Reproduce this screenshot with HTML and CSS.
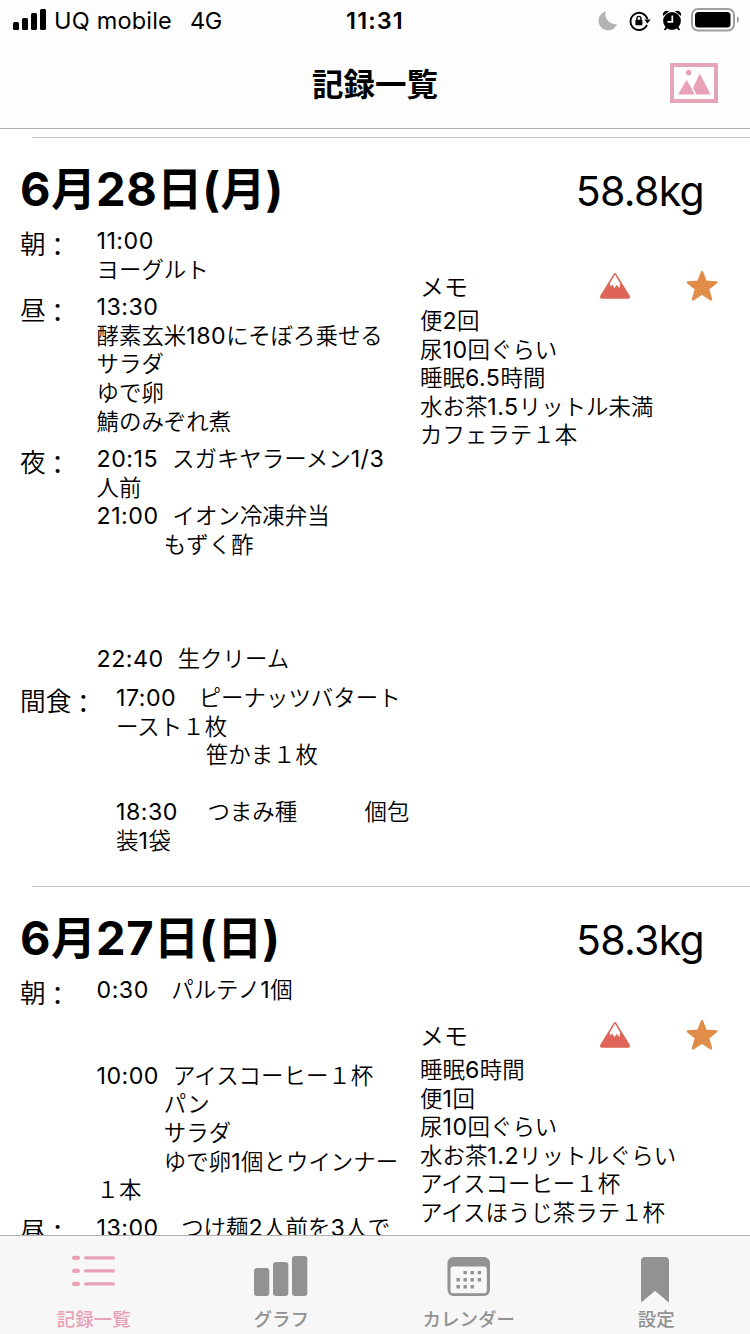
FILE: index.html
```html
<!DOCTYPE html>
<html lang="ja">
<head>
<meta charset="utf-8">
<title>記録一覧</title>
<link rel="stylesheet" href="styles.css">
</head>
<body>
<svg width="0" height="0" class="defs">
  <symbol id="mountain" viewBox="0 0 32 28">
    <path d="M15 1.6Q16 .4 17 1.6L30.6 23.6Q31.8 26.8 29 26.8H3Q.2 26.8 1.4 23.6Z" fill="#dd6456"/>
    <path d="M16 2.6 21.2 11.5 20.4 16.2 17.6 12.8 15.6 16.2 13.2 12.4 11.2 14.6 10.8 11.5Z" fill="#fff"/>
  </symbol>
  <symbol id="star" viewBox="0 0 34 32">
    <path d="M17 2.2 20.7 11.8 31.2 12.4 23.1 18.9 26 29.4 17 23.6 8 29.4 10.9 18.9 2.8 12.4 13.3 11.8Z" fill="#df8d48" stroke="#df8d48" stroke-width="2.4" stroke-linejoin="round"/>
  </symbol>
</svg>
<div class="screen">
  <header class="top">
    <div class="status">
      <div class="carrier">
        <svg class="signal" width="34" height="22" viewBox="0 0 34 22"><rect x="0" y="13" width="6" height="8" rx="1.5"/><rect x="9" y="9" width="6" height="12" rx="1.5"/><rect x="18" y="4" width="6" height="17" rx="1.5"/><rect x="27" y="0" width="6" height="21" rx="1.5"/></svg>
        <span class="name">UQ mobile</span><span class="net">4G</span>
      </div>
      <div class="clock">11:31</div>
      <div class="indicators">
        <svg width="20" height="20" viewBox="0 0 20 20"><path d="M7.500 .5A9.600 9.600 0 1 0 19 13.2A10.600 10.600 0 0 1 7.500 .5Z" fill="#b3b3b3"/></svg>
        <svg class="lock" width="22" height="20" viewBox="0 0 22 20"><path d="M18 13.9A8.6 8.6 0 1 1 18.4 8" fill="none" stroke="#000" stroke-width="1.9"/><path d="M15.4 8.4H21.6L18.4 12.6Z"/><rect x="6.4" y="8.8" width="7" height="5.4" rx=".6"/><path d="M7.9 9V7.4a2 2 0 0 1 4 0V9" fill="none" stroke="#000" stroke-width="1.4"/></svg>
        <svg class="alarm" width="20" height="21" viewBox="0 0 20 21"><circle cx="10" cy="11" r="8.9"/><path d="M1.6 4.6A3 3 0 0 1 5.6 1.6ZM18.4 4.6A3 3 0 0 0 14.4 1.6Z" stroke="#000" stroke-width="1.5"/><path d="M4.6 17.4 2.6 20M15.4 17.4 17.4 20" stroke="#000" stroke-width="1.8"/><path d="M10.3 5.6V11.8H5.4" fill="none" stroke="#fff" stroke-width="1.7"/></svg>
        <svg class="battery" width="49" height="24" viewBox="0 0 49 24"><rect x="1" y="1" width="42" height="21.5" rx="6" fill="none" stroke="#a0a0a0" stroke-width="2"/><rect x="4" y="4" width="35.5" height="15.5" rx="3.5"/><path d="M46 8.5Q48.2 9.6 48.2 11.7T46 15Z" fill="#a0a0a0"/></svg>
      </div>
    </div>
    <div class="nav">
      <h1>記録一覧</h1>
      <svg class="photo" width="48" height="40" viewBox="0 0 48 40"><rect x="2" y="2" width="44" height="36" fill="#fff" stroke="#e5a5b7" stroke-width="4"/><g fill="#e9a1b6"><circle cx="18.7" cy="9.6" r="2.8"/><path d="M8 31.6 16.5 17 22 25.8 22.2 27.4 24.8 31.6Z"/><path d="M29.7 10.4 40.6 31.6H26.4L23 25Z"/></g></svg>
    </div>
  </header>

  <main class="list">
    <section class="day">
      <div class="head"><h2><span>6</span>月<span>28</span>日<span>(</span>月<span>)</span></h2><div class="weight">58.8kg</div></div>
      <div class="body">
        <div class="meals">
          <div class="meal"><div class="label">朝<i>：</i></div><div class="text"><p><b>11:00</b></p><p>ヨーグルト</p></div></div>
          <div class="meal"><div class="label">昼<i>：</i></div><div class="text"><p><b>13:30</b></p><p>酵素玄米<b>180</b>にそぼろ乗せる</p><p>サラダ</p><p>ゆで卵</p><p>鯖のみぞれ煮</p></div></div>
          <div class="meal"><div class="label">夜<i>：</i></div><div class="text"><p><b>20:15  </b>スガキヤラーメン<b>1/3</b></p><p>人前</p><p><b>21:00  </b>イオン冷凍弁当</p><p>　　　もずく酢</p><p></p><p></p><p></p><p><b>22:40  </b>生クリーム</p></div></div>
          <div class="meal wide"><div class="label">間食<i>：</i></div><div class="text"><p><b>17:00</b>　ピーナッツバタート</p><p>ースト１枚</p><p>　　　　笹かま１枚</p><p></p><p><b>18:30 </b>　つまみ種　　　個包</p><p>装<b>1</b>袋</p></div></div>
        </div>
        <div class="memo">
          <div class="memo-head"><span>メモ</span><svg class="mt" width="32" height="28"><use href="#mountain"/></svg><svg class="st" width="34" height="32"><use href="#star"/></svg></div>
          <div class="text"><p>便<b>2</b>回</p><p>尿<b>10</b>回ぐらい</p><p>睡眠<b>6.5</b>時間</p><p>水お茶<b>1.5</b>リットル未満</p><p>カフェラテ１本</p></div>
        </div>
      </div>
    </section>
    <section class="day">
      <div class="head"><h2><span>6</span>月<span>27</span>日<span>(</span>日<span>)</span></h2><div class="weight">58.3kg</div></div>
      <div class="body">
        <div class="meals">
          <div class="meal"><div class="label">朝<i>：</i></div><div class="text"><p><b>0:30</b>　パルテノ<b>1</b>個</p><p></p><p></p><p><b>10:00  </b>アイスコーヒー１杯</p><p>　　　パン</p><p>　　　サラダ</p><p>　　　ゆで卵<b>1</b>個とウインナー</p><p>１本</p></div></div>
          <div class="meal"><div class="label">昼<i>：</i></div><div class="text"><p><b>13:00</b>　つけ麺<b>2</b>人前を<b>3</b>人で</p></div></div>
        </div>
        <div class="memo">
          <div class="memo-head"><span>メモ</span><svg class="mt" width="32" height="28"><use href="#mountain"/></svg><svg class="st" width="34" height="32"><use href="#star"/></svg></div>
          <div class="text"><p>睡眠<b>6</b>時間</p><p>便<b>1</b>回</p><p>尿<b>10</b>回ぐらい</p><p>水お茶<b>1.2</b>リットルぐらい</p><p>アイスコーヒー１杯</p><p>アイスほうじ茶ラテ１杯</p></div>
        </div>
      </div>
    </section>
  </main>

  <nav class="tabs">
    <div class="tab active"><svg width="44" height="48" viewBox="0 0 44 48"><g fill="currentColor"><rect x="0" y="3.8" width="8" height="4.2" rx="2.1"/><rect x="12" y="4.3" width="31" height="3.2" rx="1.6"/><rect x="0" y="16.8" width="8" height="4.2" rx="2.1"/><rect x="12" y="17.3" width="31" height="3.2" rx="1.6"/><rect x="0" y="29.8" width="8" height="4.2" rx="2.1"/><rect x="12" y="30.3" width="31" height="3.2" rx="1.6"/></g></svg><span>記録一覧</span></div>
    <div class="tab"><svg width="54" height="48" viewBox="0 0 54 48"><g fill="currentColor"><rect x="0" y="16" width="15.3" height="28" rx="3"/><rect x="19" y="10" width="15.3" height="34" rx="3"/><rect x="38" y="4" width="15.3" height="40" rx="3"/></g></svg><span>グラフ</span></div>
    <div class="tab"><svg width="44" height="48" viewBox="0 0 44 48"><rect x="0.5" y="5" width="42.5" height="39" rx="6" fill="currentColor"/><rect x="3.5" y="14.5" width="36.3" height="26.7" rx="2.5" fill="#f7f7f7"/><path d="M16.5 20.6h3.4M23.5 20.6h3.4M30.7 20.6h3.4M9.5 27.7h3.4M16.5 27.7h3.4M23.5 27.7h3.4M30.7 27.7h3.4M9.5 34.8h3.4M16.5 34.8h3.4M23.5 34.8h3.4" stroke="currentColor" stroke-width="3.4"/></svg><span>カレンダー</span></div>
    <div class="tab"><svg width="30" height="48" viewBox="0 0 30 48"><path d="M0 9a4 4 0 0 1 4-4H24a4 4 0 0 1 4 4V49Q28 50.6 26.5 49.5L14 38.8 1.5 49.5Q0 50.6 0 49Z" fill="currentColor"/></svg><span>設定</span></div>
  </nav>
</div>
</body>
</html>
```
FILE: styles.css
```css
* { box-sizing: border-box; margin: 0; padding: 0; }
body { background: #fff; color: #000; font-family: Inter, "Noto Sans CJK JP", sans-serif; }
svg { display: block; flex: none; overflow: visible; }
.defs { position: absolute; }
.screen { width: 750px; height: 1334px; display: flex; flex-direction: column; overflow: hidden; }

.top { flex: none; height: 129px; background: #fdfdfd; border-bottom: 1px solid #b0b0b0; }
.status { height: 40px; display: grid; grid-template-columns: 1fr auto 1fr; align-items: center; font-size: 23.5px; line-height: 40px; }
.carrier { display: flex; align-items: center; padding-left: 13px; }
.signal { margin-top: -2px; }
.name, .net, .clock { padding-top: 1px; line-height: 40px; }
.name { margin-left: 7px; letter-spacing: .2px; }
.net { margin-left: 18px; letter-spacing: -.5px; }
.clock { font-weight: 600; letter-spacing: 1.1px; }
.indicators { display: flex; align-items: center; justify-content: flex-end; padding: 0 10px 0 0; }
.indicators svg { margin-top: 1px; }
.indicators .lock { margin-left: 11px; }
.indicators .alarm { margin: 0 0 0 11px; }
.indicators .battery { margin: -1px 0 0 9px; }
.nav { height: 88px; position: relative; display: flex; justify-content: center; align-items: center; }
.nav h1 { margin-top: -4px; font: 700 31.5px/40px "Noto Sans CJK JP", sans-serif; }
.photo { position: absolute; right: 32px; top: 23px; }

.list { flex: 1; min-height: 0; overflow: hidden; padding-top: 8px; }
.day { height: 749px; position: relative; }
.day::before { content: ""; display: block; height: 1px; margin-left: 32px; background: #c6c6c8; }
.head { height: 87px; padding: 19px 46px 0 20px; display: flex; justify-content: space-between; }
.head h2 { font: 700 45px/60px "Noto Sans CJK JP", sans-serif; white-space: nowrap; }
.head h2 span { font-family: Inter, sans-serif; font-size: 47px; letter-spacing: .5px; }
.weight { font-size: 41px; line-height: 68px; letter-spacing: -.7px; }
.body { display: grid; grid-template-columns: 420px 1fr; }
.meals { display: flex; flex-direction: column; gap: 9px; }
.meal { display: grid; grid-template-columns: 76.5px 1fr; padding-left: 20px; }
.meal.wide { grid-template-columns: 96px 1fr; padding-top: 1px; }
.label { font: 350 25.7px/36px "Noto Sans CJK JP", sans-serif; white-space: nowrap; }
.label i { display: inline-block; font-style: normal; font-weight: 400; line-height: 30px; vertical-align: -2px; margin-left: -1px; }
.text { font: 350 22.45px/28.6px "Noto Sans CJK JP", sans-serif; }
.text p { height: 28.6px; white-space: pre; }
.text b { font: 400 23.2px/28px Inter, sans-serif; letter-spacing: .5px; }
.memo { padding-top: 41px; }
.memo-head { display: flex; align-items: center; height: 39px; font: 350 24px/39px "Noto Sans CJK JP", sans-serif; }
.mt { margin-left: 131px; }
.st { margin-left: 54px; }

.tabs { flex: none; height: 99px; border-top: 1px solid #b2b2b2; background: #f7f7f7; display: grid; grid-template-columns: repeat(4, 1fr); }
.tab { display: flex; flex-direction: column; align-items: center; padding-top: 16px; color: #929292; font: 500 18.5px/28px "Noto Sans CJK JP", sans-serif; }
.tab.active { color: #e8a2b6; }
.tab span { margin-top: 4px; }
```
